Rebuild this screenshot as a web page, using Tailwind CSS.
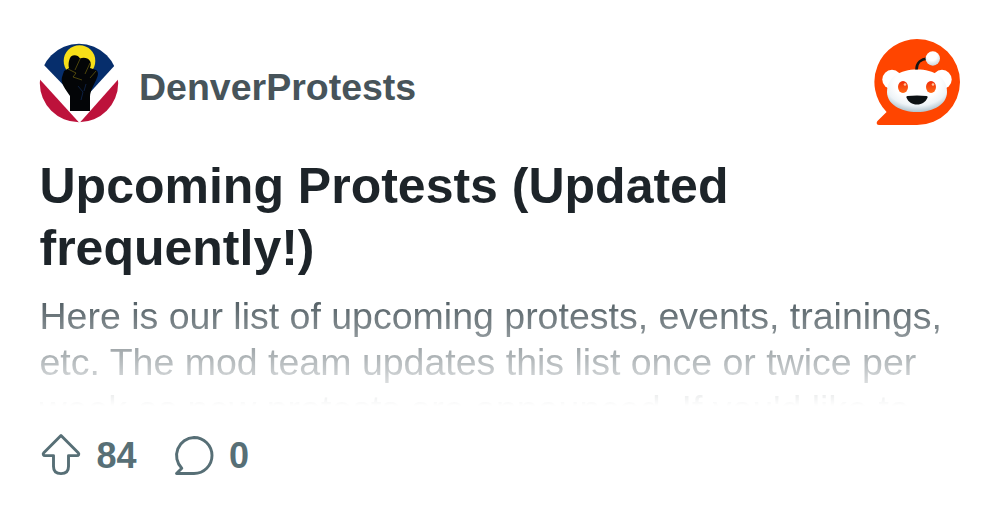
<!DOCTYPE html>
<html lang="en">
<head>
    <meta charset="UTF-8">
    <meta name="viewport" content="width=device-width, initial-scale=1.0">
    <title>Upcoming Protests - DenverProtests</title>
    <script src="https://cdn.jsdelivr.net/npm/@tailwindcss/browser@4"></script>
</head>
<body class="bg-white font-['Liberation_Sans',Arial,sans-serif]">
    <main class="flex h-[521px] w-[1000px] flex-col overflow-hidden px-[39.5px] pt-[39px]">
        <header class="flex h-[87px] items-start justify-between">
            <div class="flex items-center pt-[4px]">
                <svg class="-ml-px h-20 w-20" viewBox="0 0 80 80" fill="none">
                    <defs>
                        <clipPath id="avatar"><circle cx="40" cy="40" r="39.2"/></clipPath>
                    </defs>
                    <g clip-path="url(#avatar)">
                        <path d="M0 0H80V80H0Z" fill="#fff"/>
                        <path d="M3.500 20.500L10 0H70L77.500 20.500L50.500 50H32Z" fill="#062e6c"/>
                        <path d="M0 35.500L40.500 80H0Z" fill="#bd123b"/>
                        <path d="M80 35.500L40.500 80H80Z" fill="#bd123b"/>
                        <circle cx="40.500" cy="18" r="15.800" fill="#f8df18"/>
                        <path d="M31 68V53C28 48 24 44 23 39C22 35 24 32 25 28L30 25C29 21 30 16 32 13.500C35 11.500 39 12 41 15.500C45 14 49 15 51 18C52 20 52 22 51 25L57 27C60 29 59 33 57.500 36C55 42 51 48 51 54V68Z" fill="#030507"/>
                        <path d="M29 26L37 30L34 34L43 37M41 16L36 27M51 20L46 31M57 28L51 35" stroke="#bfa915" stroke-width=".4"/>
                        <path d="M39 43L44 49L42 57M47 41L45 48" stroke="#102751" stroke-width=".8"/>
                    </g>
                </svg>
                <span class="ml-[20.5px] pt-[7px] text-[37.5px] leading-[48px] font-bold text-[#47545a]">DenverProtests</span>
            </div>
            <svg class="mr-[.5px] h-[87px] w-[87px]" viewBox="0 0 87 87" fill="none">
                <defs>
                    <radialGradient id="face" cx="50%" cy="32%" r="67%">
                        <stop offset=".55" stop-color="#fff"/>
                        <stop offset=".8" stop-color="#edf3f7"/>
                        <stop offset="1" stop-color="#b5c7d1"/>
                    </radialGradient>
                    <radialGradient id="ball" cx="45%" cy="30%" r="70%">
                        <stop offset=".5" stop-color="#fff"/>
                        <stop offset="1" stop-color="#cbd7de"/>
                    </radialGradient>
                    <linearGradient id="eye" x1="0" y1="0" x2="0" y2="1">
                        <stop stop-color="#f02c08"/>
                        <stop offset="1" stop-color="#ff6814"/>
                    </linearGradient>
                </defs>
                <path d="M44 0A43 43 0 1 1 44 86H6C3.500 86 3 83.500 4.700 81.800L13.600 73A43 43 0 0 1 44 0Z" fill="#ff4500"/>
                <circle cx="19" cy="40.500" r="9.700" fill="#fff"/>
                <circle cx="69" cy="40.500" r="9.700" fill="#fff"/>
                <path d="M44 30.500C61 30.500 74 38 74 53C74 65 61 73 44 73S14 65 14 53C14 38 27 30.500 44 30.500Z" fill="url(#face)"/>
                <path d="M43.500 30.500C43.500 24 48 20 54.500 19.500" stroke="#151515" stroke-width="2.600"/>
                <circle cx="59.800" cy="19.500" r="7.200" fill="url(#ball)"/>
                <ellipse cx="30" cy="48" rx="5" ry="6" fill="url(#eye)"/>
                <ellipse cx="58" cy="48" rx="5" ry="6" fill="url(#eye)"/>
                <circle cx="32" cy="45.500" r="1.300" fill="#ffc49c"/>
                <circle cx="60" cy="45.500" r="1.300" fill="#ffc49c"/>
                <path d="M34.500 57Q44 56 53.500 57C54.500 57 54.800 57.800 54.500 58.700C52.500 63 49 65.500 44 65.500S35.500 63 33.500 58.700C33.200 57.800 33.500 57 34.500 57Z" fill="#0d1214"/>
            </svg>
        </header>

        <h1 class="mt-[28.7px] text-[50px] leading-[62px] font-bold text-[#1d2429]">Upcoming Protests (Updated<br>frequently!)</h1>

        <p class="mt-[13.9px] h-[113.4px] overflow-hidden whitespace-nowrap text-[37.5px] leading-[46.5px] text-[#47545a] [mask-image:linear-gradient(to_bottom,black,transparent)]">Here is our list of upcoming protests, events, trainings,<br>etc. The mod team updates this list once or twice per<br>week as new protests are announced. If you'd like to</p>

        <footer class="mt-[25px] flex items-center text-[36px] leading-[48px] font-bold text-[#576f76]">
            <svg class="h-12 w-[42px]" viewBox="0 0 42 48" fill="none" stroke="currentColor" stroke-width="2.900" stroke-linejoin="round">
                <path d="M21 4.500L38.200 21.700C39.400 23 38.700 24.600 37 24.600H28.500V35.500C28.500 40 25.800 42.600 21 42.600S13.500 40 13.500 35.500V24.600H5C3.300 24.600 2.600 23 3.800 21.700Z"/>
            </svg>
            <span class="ml-[15px] pt-px">84</span>
            <svg class="ml-[36px] h-12 w-[42px]" viewBox="0 0 42 48" fill="none" stroke="currentColor" stroke-width="2.900" stroke-linejoin="round">
                <path d="M21 6.500A18 18 0 0 1 21 42.500H3.500L8.800 37.200A18 18 0 0 1 21 6.500Z"/>
            </svg>
            <span class="ml-[14.5px] pt-px">0</span>
        </footer>
    </main>
</body>
</html>
